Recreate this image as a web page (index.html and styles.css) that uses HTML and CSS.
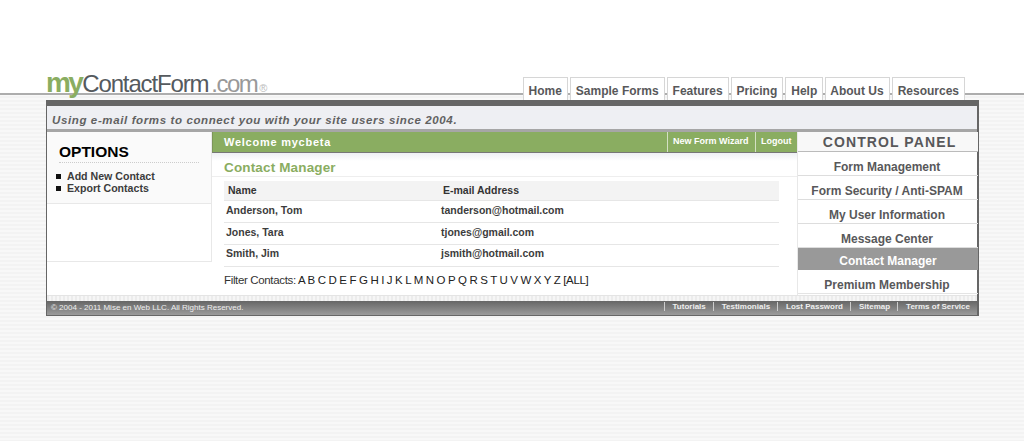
FILE: index.html
```html
<!DOCTYPE html>
<html lang="en">
<head>
<meta charset="utf-8">
<title>myContactForm.com</title>
<link rel="stylesheet" href="styles.css">
</head>
<body>
<header class="top">
  <div class="top-inner">
    <div class="logo"><span class="logo-my">my</span><span class="logo-name">ContactForm</span><span class="logo-com">.com</span><span class="logo-r">®</span></div>
    <nav class="tabs">
      <a class="tab">Home</a><a class="tab">Sample Forms</a><a class="tab">Features</a><a class="tab">Pricing</a><a class="tab">Help</a><a class="tab">About Us</a><a class="tab">Resources</a>
    </nav>
  </div>
</header>
<div class="frame">
  <div class="tagline">Using e-mail forms to connect you with your site users since 2004.</div>
  <div class="columns">
    <aside class="options">
      <div class="options-box">
        <h2 class="options-title">OPTIONS</h2>
        <ul class="options-list">
          <li>Add New Contact</li>
          <li>Export Contacts</li>
        </ul>
      </div>
      <div class="options-blank"></div>
    </aside>
    <main class="middle">
      <div class="welcome">
        <span class="welcome-text">Welcome mycbeta</span>
        <a class="welcome-link wizard">New Form Wizard</a>
        <a class="welcome-link logout">Logout</a>
      </div>
      <h1 class="page-title">Contact Manager</h1>
      <div class="table">
        <div class="thead"><span class="c1">Name</span><span class="c2">E-mail Address</span></div>
        <div class="row"><span class="c1">Anderson, Tom</span><span class="c2">tanderson@hotmail.com</span></div>
        <div class="row"><span class="c1">Jones, Tara</span><span class="c2">tjones@gmail.com</span></div>
        <div class="row"><span class="c1">Smith, Jim</span><span class="c2">jsmith@hotmail.com</span></div>
      </div>
      <p class="filter">Filter Contacts: <span class="letters">A B C D E F G H I J K L M N O P Q R S T U V W X Y Z [ALL]</span></p>
    </main>
    <aside class="panel">
      <div class="panel-title">CONTROL PANEL</div>
      <a class="panel-item">Form Management</a>
      <a class="panel-item">Form Security / Anti-SPAM</a>
      <a class="panel-item">My User Information</a>
      <a class="panel-item">Message Center</a>
      <a class="panel-item active">Contact Manager</a>
      <a class="panel-item last">Premium Membership</a>
    </aside>
  </div>
  <div class="strip"></div>
  <footer class="footer">
    <span class="copy">© 2004 - 2011 Mise en Web LLC. All Rights Reserved.</span>
    <nav class="foot-links"><a>Tutorials</a><a>Testimonials</a><a>Lost Password</a><a>Sitemap</a><a>Terms of Service</a></nav>
  </footer>
</div>
</body>
</html>
```
FILE: styles.css
```css
* { box-sizing: border-box; }
html, body { margin: 0; padding: 0; }
body {
  height: 441px;
  overflow: hidden;
  font-family: "Liberation Sans", Arial, sans-serif;
  background: repeating-linear-gradient(to bottom, #f3f3f3 0, #f3f3f3 2px, #f8f8f8 2px, #f8f8f8 4px);
}
.top {
  height: 95px;
  background: #fff;
  border-bottom: 2px solid #adadad;
}
.top-inner {
  position: relative;
  height: 93px;
  padding: 0 59px 0 46px;
  display: flex;
  justify-content: space-between;
  align-items: flex-start;
}
.logo {
  padding-top: 66px;
  line-height: 33px;
  white-space: nowrap;
  display: flex;
  align-items: baseline;
}
.logo-my { font-size: 28px; font-weight: bold; color: #8aad61; letter-spacing: -2.6px; }
.logo-name { font-size: 24px; color: #555a5e; letter-spacing: -1.15px; margin-left: 1px; }
.logo-com { font-size: 24px; color: #999; margin-left: 3px; letter-spacing: -1.5px; }
.logo-r { font-size: 11px; color: #bbb; margin-left: 2px; }
.tabs {
  display: flex;
  gap: 2px;
  position: relative;
  z-index: 2;
  margin-top: 77px;
}
.tab {
  height: 23px;
  padding: 0 5px;
  background: #fff;
  border: 1px solid #d6d6d6;
  border-bottom: 0;
  font-size: 12px;
  font-weight: bold;
  line-height: 26px;
  color: #58585a;
  white-space: nowrap;
}
.tab:nth-child(6) { padding-left: 4px; }
.frame {
  width: 933px;
  height: 216px;
  margin: 5px 0 0 46px;
  position: relative;
  z-index: 3;
  background: #fff;
  border: 1px solid #666;
  border-top: 6px solid #666;
  border-right-width: 2px;
}
.tagline {
  height: 26px;
  padding: 7px 0 0 5px;
  background: #eeeff3;
  border-bottom: 3px solid #a6a6a6;
  font-size: 11.5px;
  font-weight: bold;
  font-style: italic;
  letter-spacing: .62px;
  color: #616161;
  line-height: 15px;
}
.columns { display: flex; height: 163px; }
.options { width: 165px; flex: none; }
.options-box {
  height: 72px;
  background: #fafafa;
  border-bottom: 1px solid #e8e8e8;
  border-right: 1px solid #e8e8e8;
  padding: 10px 0 0 12px;
}
.options-blank { height: 58px; border-bottom: 1px solid #e8e8e8; border-right: 1px solid #e8e8e8; }
.options-title {
  margin: 0;
  width: 140px;
  height: 21px;
  font-size: 15.5px;
  line-height: 20px;
  color: #000;
  border-bottom: 1px dotted #ccc;
}
.options-list { margin: 7px 0 0 -3px; padding: 0; list-style: none; font-size: 10.6px; font-weight: bold; color: #3c3c3c; }
.options-list li { line-height: 12px; padding-left: 11px; position: relative; }
.options-list li::before {
  content: "";
  position: absolute;
  left: 0;
  top: 4px;
  width: 5px;
  height: 5px;
  background: #111;
}
.middle { width: 585px; flex: none; }
.welcome {
  height: 21px;
  display: flex;
  background: #8aad61;
  border-left: 1px solid #7d9659;
  border-bottom: 1px solid #777;
  color: #fff;
  font-weight: bold;
}
.welcome-text { flex: 1; padding-left: 11px; font-size: 11px; letter-spacing: .75px; line-height: 20px; }
.welcome-link { border-left: 1px solid #d4e0c4; font-size: 9px; line-height: 19px; padding: 0 5px; white-space: nowrap; }
.wizard { width: 88px; }
.logout { width: 42px; }
.page-title {
  margin: 0;
  height: 24px;
  padding: 6px 0 0 12px;
  font-size: 13.5px;
  line-height: 17px;
  letter-spacing: .15px;
  color: #8aad61;
  background: linear-gradient(to bottom, #eef0f3, #fff 8px);
  border-bottom: 1px solid #eee;
}
.table { margin: 4px 18px 0 12px; }
.thead {
  display: flex;
  height: 19px;
  background: #f3f3f3;
  font-size: 10.5px;
  font-weight: bold;
  color: #333;
  line-height: 18px;
  padding-left: 4px;
}
.thead .c1 { width: 215px; }
.row {
  display: flex;
  height: 22px;
  border-top: 1px solid #e6e6e6;
  font-size: 10.5px;
  font-weight: bold;
  color: #3c3c3c;
  line-height: 18px;
  padding-left: 2px;
}
.row:last-child { border-bottom: 1px solid #e6e6e6; height: 23px; line-height: 17px; }
.row .c1 { width: 215px; }
.filter {
  margin: 6px 0 0 12px;
  font-size: 11.5px;
  line-height: 15px;
  color: #333;
  letter-spacing: -.35px;
  white-space: nowrap;
}
.letters { color: #222; letter-spacing: -.35px; }
.panel { width: 181px; flex: none; border-left: 1px solid #e8e8e8; }
.panel-title {
  height: 20px;
  background: #f8f8f8;
  border-bottom: 1px solid #bbb;
  padding-left: 3px;
  text-align: center;
  font-size: 14px;
  font-weight: bold;
  letter-spacing: 1.1px;
  line-height: 20px;
  color: #58585a;
}
.panel-item {
  display: block;
  height: 24px;
  border-bottom: 1px solid #ddd;
  padding-right: 2px;
  text-align: center;
  font-size: 12px;
  font-weight: bold;
  line-height: 30px;
  color: #58585a;
}
.panel-item.active {
  height: 22px;
  background: #999;
  color: #fff;
  border-bottom: 0;
  line-height: 26px;
  padding-right: 0;
}
.panel-item.last { border-bottom: 1px solid #e4e4e4; line-height: 30px; }
.strip { height: 6px; background: repeating-linear-gradient(to right, #ececec 0, #ececec 2px, #f6f6f6 2px, #f6f6f6 4px); border-top: 1px solid #e4e4e4; }
.footer {
  height: 14px;
  background: linear-gradient(to bottom, #666, #9b9b9b);
  display: flex;
  justify-content: space-between;
  padding: 0 7px 0 4px;
  color: #eee;
  font-size: 8px;
  line-height: 13px;
}
.foot-links { display: flex; font-weight: bold; }
.foot-links a { padding: 0 0 0 8px; margin-left: 7px; border-left: 1px solid #ccc; height: 9px; line-height: 9px; margin-top: 1px; }
```
